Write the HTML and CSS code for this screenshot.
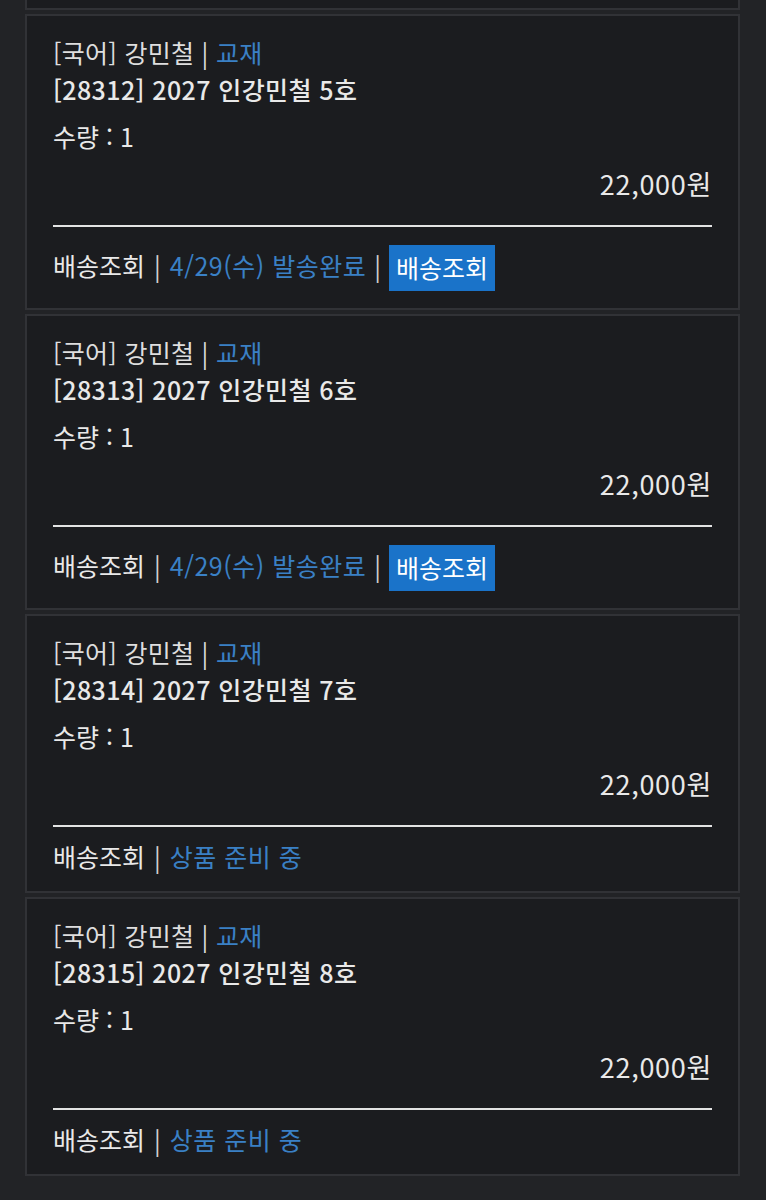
FILE: index.html
```html
<!DOCTYPE html>
<html lang="ko">
<head>
    <meta charset="UTF-8">
    <meta name="viewport" content="width=device-width, initial-scale=1.0">
    <title>주문 내역</title>
    <link rel="stylesheet" href="styles.css">
</head>
<body>
    <div class="order-list">
        <div class="order-card">
            <div class="category">[국어] 강민철 | <span class="blue">교재</span></div>
            <div class="product">[28311] 2027 인강민철 4호</div>
            <div class="qty">수량 : 1</div>
            <div class="price">22,000원</div>
            <div class="delivery">
                <span>배송조회</span><span class="sep">|</span><span class="blue status">4/29(수) 발송완료</span><span class="sep">|</span><span class="track-btn">배송조회</span>
            </div>
        </div>

        <div class="order-card">
            <div class="category">[국어] 강민철 | <span class="blue">교재</span></div>
            <div class="product">[28312] 2027 인강민철 5호</div>
            <div class="qty">수량 : 1</div>
            <div class="price">22,000원</div>
            <div class="delivery">
                <span>배송조회</span><span class="sep">|</span><span class="blue status">4/29(수) 발송완료</span><span class="sep">|</span><span class="track-btn">배송조회</span>
            </div>
        </div>

        <div class="order-card">
            <div class="category">[국어] 강민철 | <span class="blue">교재</span></div>
            <div class="product">[28313] 2027 인강민철 6호</div>
            <div class="qty">수량 : 1</div>
            <div class="price">22,000원</div>
            <div class="delivery">
                <span>배송조회</span><span class="sep">|</span><span class="blue status">4/29(수) 발송완료</span><span class="sep">|</span><span class="track-btn">배송조회</span>
            </div>
        </div>

        <div class="order-card">
            <div class="category">[국어] 강민철 | <span class="blue">교재</span></div>
            <div class="product">[28314] 2027 인강민철 7호</div>
            <div class="qty">수량 : 1</div>
            <div class="price">22,000원</div>
            <div class="delivery">
                <span>배송조회</span><span class="sep">|</span><span class="blue status">상품 준비 중</span>
            </div>
        </div>

        <div class="order-card">
            <div class="category">[국어] 강민철 | <span class="blue">교재</span></div>
            <div class="product">[28315] 2027 인강민철 8호</div>
            <div class="qty">수량 : 1</div>
            <div class="price">22,000원</div>
            <div class="delivery">
                <span>배송조회</span><span class="sep">|</span><span class="blue status">상품 준비 중</span>
            </div>
        </div>
    </div>
</body>
</html>
```

FILE: styles.css
```css
body {
    margin: 0;
    background-color: #222326;
    font-family: "Noto Sans CJK KR", "Noto Sans", sans-serif;
    color: #e9e9e9;
}

.order-list {
    display: flex;
    flex-direction: column;
    gap: 4px;
    padding: 0 26px 0 25px;
    margin-top: -286px;
}

.order-card {
    background-color: #1b1c1f;
    border: 2px solid #313236;
    padding: 18px 26px 0 26px;
    font-size: 25px;
    line-height: 37px;
}

.category {
    color: #dedede;
    letter-spacing: 0.3px;
}

.product {
    font-weight: 500;
    letter-spacing: 0.4px;
}

.qty {
    margin-top: 10px;
}

.price {
    margin-top: 10px;
    text-align: right;
    font-size: 27px;
    letter-spacing: 0.7px;
    padding-bottom: 23px;
    border-bottom: 2px solid #e3e3e3;
}

.blue {
    color: #3a80c5;
}

.delivery {
    display: flex;
    align-items: center;
    padding: 11px 0 16px;
}

.status {
    letter-spacing: 0.5px;
}

.sep {
    margin: 0 9px;
    color: #cfcfcf;
}

.status + .sep {
    margin: 0 8px;
}

.track-btn {
    background-color: #1a73c9;
    color: #ffffff;
    padding: 4px 7px 5px;
    margin: 7px 0 1px 0;
}
```
